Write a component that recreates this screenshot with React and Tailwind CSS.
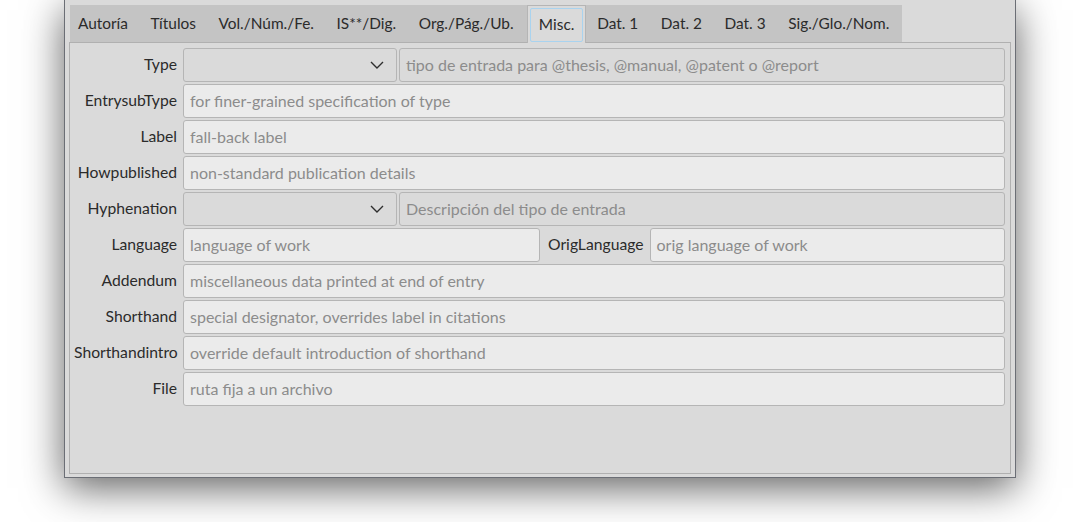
import React from 'react';

const tabs = ['Autoría', 'Títulos', 'Vol./Núm./Fe.', 'IS**/Dig.', 'Org./Pág./Ub.', 'Misc.', 'Dat. 1', 'Dat. 2', 'Dat. 3', 'Sig./Glo./Nom.'];

function Chevron() {
  return (
    <svg width="14" height="8" viewBox="0 0 14 8" fill="none">
      <path d="M1 1l6 6 6-6" stroke="#2e2e2e" strokeWidth="1.4" />
    </svg>
  );
}

function Field({ placeholder, disabled, className = '' }) {
  return (
    <div
      className={`h-[34px] flex items-center px-[6px] rounded-[3px] border border-[#b5b5b5] text-[#8c8c8c] whitespace-nowrap overflow-hidden ${
        disabled ? 'bg-[#dadada]' : 'bg-[#ebebeb]'
      } ${className}`}
    >
      {placeholder}
    </div>
  );
}

function Combo() {
  return (
    <div className="h-[34px] w-[214px] flex items-center justify-end pr-[12px] rounded-[3px] border border-[#b5b5b5] bg-[#dadada]">
      <Chevron />
    </div>
  );
}

function Label({ children }) {
  return <div className="w-[103px] shrink-0 text-right whitespace-nowrap text-[#2b2b2b] text-[15.7px]">{children}</div>;
}

function Row({ label, children }) {
  return (
    <div className="flex items-center gap-[6px]">
      <Label>{label}</Label>
      <div className="flex-1 flex gap-[2px] min-w-0">{children}</div>
    </div>
  );
}

export default function App() {
  return (
    <div className="min-h-screen bg-white font-['Lato',sans-serif] text-[16px] overflow-hidden">
      <div className="ml-[64px] w-[952px] h-[478px] bg-[#dadada] border-x border-b border-[#6b6e75] shadow-[0_10px_38px_rgba(0,0,0,0.62)] px-[4px] pt-[5px] pb-[3px] flex flex-col">
        <div className="flex ml-[1px] h-[37px] relative z-10">
          <div className="flex bg-[#c4c4c4] h-[37px] items-stretch text-[15.4px] pr-[1px]">
            {tabs.map((t) =>
              t === 'Misc.' ? (
                <div key={t} className="h-[38px] ml-[2.5px] bg-[#dadada] border-x border-t border-[#b5b5b5] px-[2px] pt-[2px]">
                  <div className="h-[34px] flex items-center px-[7.5px] border border-[#a9d3ef] rounded-[2px] text-[#2b2b2b]">
                    {t}
                  </div>
                </div>
              ) : (
                <div key={t} className="flex items-center px-[11.3px] text-[#2b2b2b] first:pl-[8px]">
                  {t}
                </div>
              )
            )}
          </div>
        </div>
        <div className="flex-1 border border-[#b0b0b0] pt-[5px] pl-[4px] pr-[5px] flex flex-col gap-[2px]">
          <Row label="Type">
            <Combo />
            <Field disabled className="flex-1" placeholder="tipo de entrada para @thesis, @manual, @patent o @report" />
          </Row>
          <Row label="EntrysubType">
            <Field className="flex-1" placeholder="for finer-grained specification of type" />
          </Row>
          <Row label="Label">
            <Field className="flex-1" placeholder="fall-back label" />
          </Row>
          <Row label="Howpublished">
            <Field className="flex-1" placeholder="non-standard publication details" />
          </Row>
          <Row label="Hyphenation">
            <Combo />
            <Field disabled className="flex-1" placeholder="Descripción del tipo de entrada" />
          </Row>
          <div className="flex items-center gap-[6px]">
            <Label>Language</Label>
            <Field className="w-[357px]" placeholder="language of work" />
            <div className="ml-[2px] whitespace-nowrap text-[#2b2b2b] text-[15.7px]">OrigLanguage</div>
            <Field className="flex-1" placeholder="orig language of work" />
          </div>
          <Row label="Addendum">
            <Field className="flex-1" placeholder="miscellaneous data printed at end of entry" />
          </Row>
          <Row label="Shorthand">
            <Field className="flex-1" placeholder="special designator, overrides label in citations" />
          </Row>
          <Row label="Shorthandintro">
            <Field className="flex-1" placeholder="override default introduction of shorthand" />
          </Row>
          <Row label="File">
            <Field className="flex-1" placeholder="ruta fija a un archivo" />
          </Row>
        </div>
      </div>
    </div>
  );
}
